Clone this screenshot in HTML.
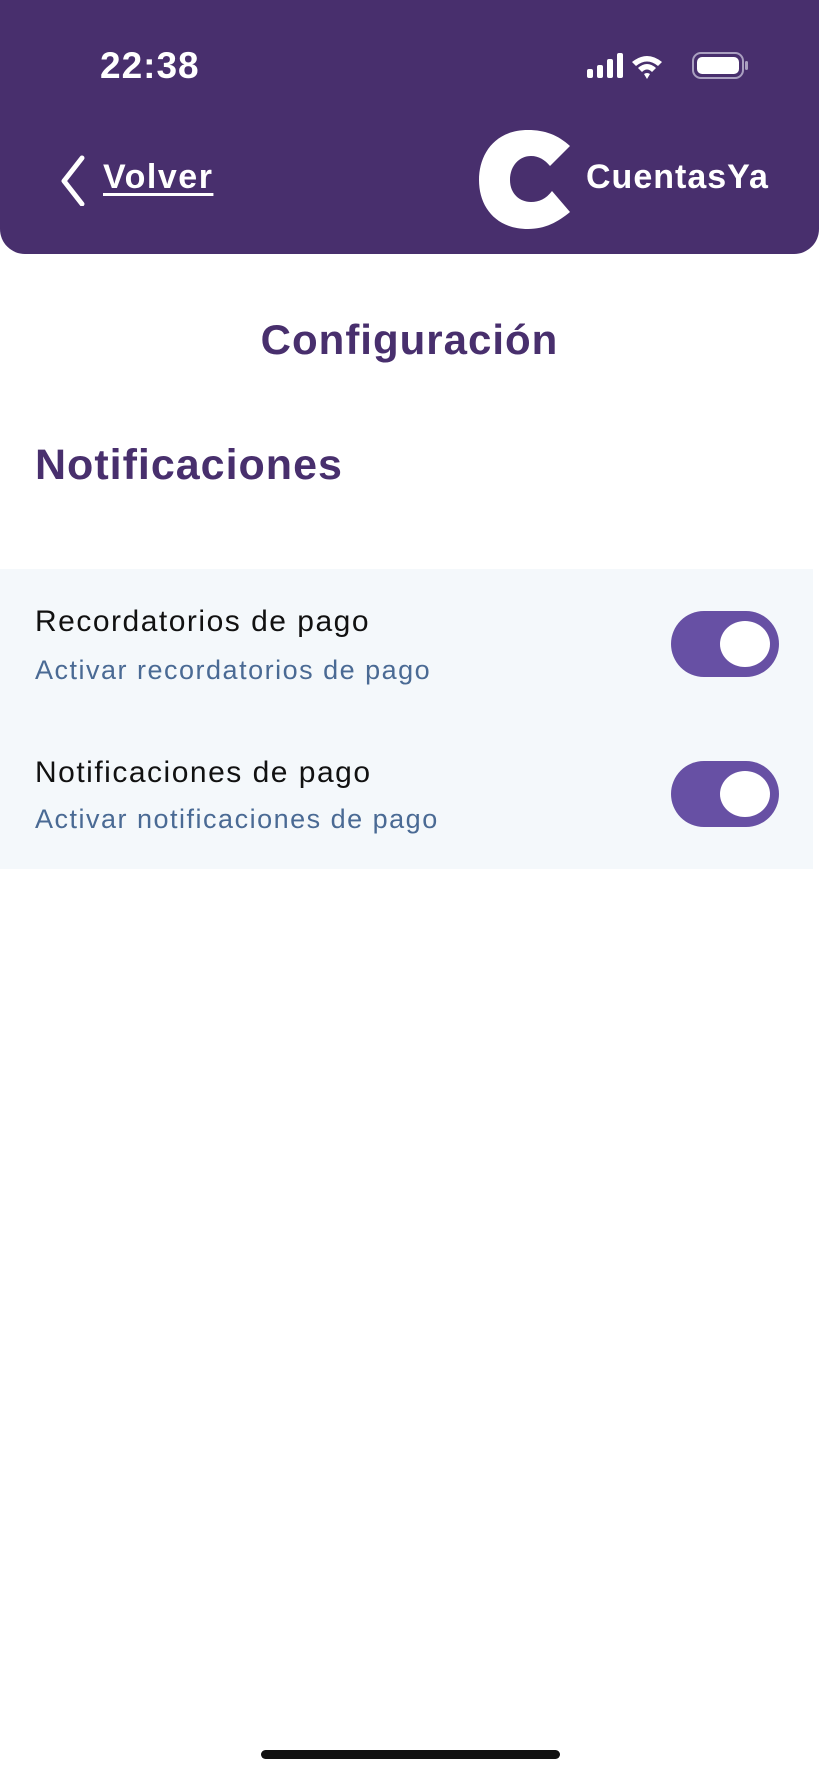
<!DOCTYPE html>
<html><head><meta charset="utf-8"><style>
*{margin:0;padding:0;box-sizing:border-box}
body{width:819px;height:1775px;background:#fff;position:relative;overflow:hidden;font-family:"Liberation Sans",sans-serif}
.hdr{position:absolute;left:0;top:0;width:819px;height:254px;background:#482f6d;border-radius:0 0 25px 25px}
.t{position:absolute;color:#fff;white-space:nowrap}
.panel{position:absolute;left:0;top:569px;width:813px;height:300px;background:#f4f8fb}
.tog{position:absolute;left:671px;width:108px;height:66px;border-radius:33px;background:#6750a4}
.tog::after{content:"";position:absolute;right:9px;top:10px;width:50px;height:46px;border-radius:50%;background:#fff}
.ti{position:absolute;left:35px;font-size:30px;letter-spacing:1.5px;color:#111;white-space:nowrap}
.su{position:absolute;left:35px;font-size:27px;letter-spacing:1.5px;color:#4a6a94;white-space:nowrap}
</style></head><body>
<div class="hdr">
<div class="t" style="left:100px;top:45px;font-size:37px;font-weight:bold;letter-spacing:1px">22:38</div>
<svg style="position:absolute;left:585px;top:52px" width="170" height="30" viewBox="0 0 170 30">
<rect x="2" y="17" width="6" height="9" rx="2" fill="#fff"/><rect x="12" y="13" width="6" height="13" rx="2" fill="#fff"/><rect x="22" y="7" width="6" height="19" rx="2" fill="#fff"/><rect x="32" y="1" width="6" height="25" rx="2" fill="#fff"/>
<path d="M47 10 Q62 -2 77 10 L73 14 Q62 5 51 14Z M53 16 Q62 8 71 16 L67 20 Q62 15 57 20Z M59 22 L62 27 L65 22 Q62 20 59 22Z" fill="#fff"/>
<rect x="108" y="1" width="50" height="25" rx="8" fill="none" stroke="#aaa0c0" stroke-width="2"/><rect x="112" y="5" width="42" height="17" rx="5" fill="#fff"/><rect x="160" y="9" width="3" height="9" rx="1.5" fill="#aaa0c0"/>
</svg>
<svg style="position:absolute;left:56px;top:154px" width="32" height="52" viewBox="0 0 32 52"><path d="M26 4 L8 27 L26 50" fill="none" stroke="#fff" stroke-width="5" stroke-linecap="round" stroke-linejoin="round"/></svg>
<div class="t" style="left:103px;top:158px;font-size:34px;font-weight:bold;letter-spacing:1.5px;text-decoration:underline;text-underline-offset:5px">Volver</div>
<svg style="position:absolute;left:479px;top:130px" width="92" height="99" viewBox="0 0 92 99"><path d="M49 0 C15 0 0 25 0 50 C0 77 17 99 49 99 C66 99 79 92 91 82 L73 61 C67 69 60 72 52 72 C41 72 31 64 31 50 C31 35 41 26 52 26 C60 26 66 30 71 36 L91 16 C79 5 66 0 49 0Z" fill="#fff"/></svg>
<div class="t" style="left:586px;top:158px;font-size:34px;font-weight:bold;letter-spacing:1px">CuentasYa</div>
</div>
<div style="position:absolute;left:0;width:819px;top:316px;text-align:center;font-size:42px;font-weight:bold;letter-spacing:1px;color:#482f6d">Configuración</div>
<div style="position:absolute;left:35px;top:441px;font-size:43px;font-weight:bold;letter-spacing:1px;color:#482f6d">Notificaciones</div>
<div class="panel"></div>
<div class="ti" style="top:605px">Recordatorios de pago</div>
<div class="su" style="top:655px">Activar recordatorios de pago</div>
<div class="tog" style="top:611px"></div>
<div class="ti" style="top:756px">Notificaciones de pago</div>
<div class="su" style="top:804px">Activar notificaciones de pago</div>
<div class="tog" style="top:761px"></div>
<div style="position:absolute;left:261px;top:1750px;width:299px;height:9px;border-radius:5px;background:#111"></div>
</body></html>
